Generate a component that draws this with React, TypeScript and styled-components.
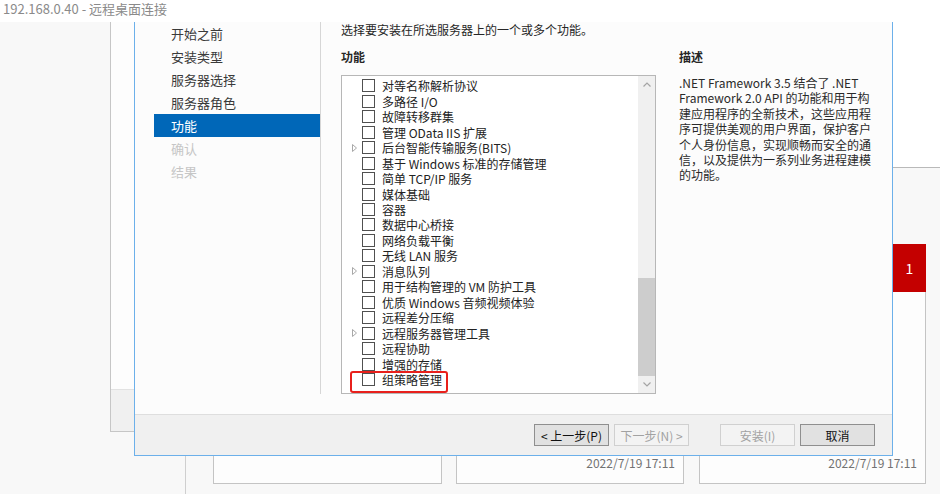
import styled, { createGlobalStyle } from "styled-components";

const GlobalStyle = createGlobalStyle`
  body {
    margin: 0;
    background: #f8f8f8;
    font-family: "Noto Sans CJK SC", "Noto Sans", sans-serif;
  }
`;

const Screen = styled.div`
  width: 940px;
  height: 494px;
  display: flex;
  flex-direction: column;
  overflow: hidden;
`;

const TitleBar = styled.div`
  height: 22px;
  box-sizing: border-box;
  flex-shrink: 0;
  background: #ffffff;
  padding: 1px 0 0 3px;
  font-size: 13px;
  line-height: 15px;
  color: #8a8a8a;
`;

const Desktop = styled.div`
  position: relative;
  flex: 1;
  background: #f8f8f8;
  overflow: hidden;
`;

// pieces of the server manager that sit behind the wizard
const TopPanel = styled.div`
  position: absolute;
  left: 880px;
  right: 0;
  top: 0;
  height: 145px;
  background: #ffffff;
  border-bottom: 1px solid #b9b9b9;
`;

const ColumnLine = styled.div`
  position: absolute;
  left: 185px;
  top: 420px;
  bottom: 0;
  border-left: 1px solid #cfcfcf;
`;

const Tile = styled.div<{ $x: number; $w: number }>`
  position: absolute;
  left: ${(p) => p.$x}px;
  top: 222px;
  width: ${(p) => p.$w}px;
  height: 240px;
  box-sizing: border-box;
  border: 1px solid #c4c4c4;
  background: #fdfdfd;
`;

const TileTime = styled.div`
  position: absolute;
  right: 8px;
  bottom: 12px;
  font-size: 12px;
  line-height: 16px;
  color: #727272;
`;

const Badge = styled.div`
  position: absolute;
  top: -1px;
  right: -1px;
  width: 33px;
  height: 48px;
  background: #c40000;
  color: #ffffff;
  font-size: 14px;
  display: flex;
  align-items: center;
  justify-content: center;
`;

const BackWindow = styled.div`
  position: absolute;
  left: 110px;
  top: 0;
  width: 700px;
  height: 410px;
  box-sizing: border-box;
  border: 1px solid #c6c6c6;
  border-top: none;
  background: #fdfdfd;
  display: flex;
  flex-direction: column;
`;

const BackFooter = styled.div`
  margin-top: auto;
  height: 41px;
  background: #f0f0f0;
  border-top: 1px solid #e2e2e2;
`;

// the wizard dialog
const Dialog = styled.div`
  position: absolute;
  left: 134px;
  top: 0;
  width: 759px;
  height: 434px;
  box-sizing: border-box;
  border: 1px solid #6cb0ea;
  border-top: none;
  background: #fcfcfc;
  display: flex;
  flex-direction: column;
`;

const DialogBody = styled.div`
  height: 392px;
  display: flex;
  padding-bottom: 20px;
  box-sizing: border-box;
`;

const Nav = styled.div`
  width: 186px;
  box-sizing: border-box;
  padding-left: 19px;
  border-right: 1px solid #d6d6d6;
  display: flex;
  flex-direction: column;
`;

const NavItem = styled.div<{ $active?: boolean; $disabled?: boolean }>`
  height: 23px;
  line-height: 23px;
  padding-left: 17px;
  font-size: 13px;
  background: ${(p) => (p.$active ? "#0067b8" : "transparent")};
  color: ${(p) => (p.$active ? "#ffffff" : p.$disabled ? "#c6c6c6" : "#3a3a3a")};
`;

const Content = styled.div`
  flex: 1;
  padding-left: 20px;
  font-size: 12px;
  color: #262626;
`;

const Intro = styled.div`
  line-height: 16px;
`;

const Columns = styled.div`
  margin-top: 11px;
  display: grid;
  grid-template-columns: 315px 210px;
  column-gap: 23px;
`;

const Heading = styled.div`
  font-weight: bold;
  line-height: 16px;
  height: 16px;
  margin-bottom: 10px;
`;

const ListBox = styled.div`
  height: 319px;
  box-sizing: border-box;
  border: 1px solid #b7b7b7;
  background: #ffffff;
  display: flex;
`;

const Items = styled.div`
  flex: 1;
  padding-top: 2px;
`;

const Row = styled.div`
  position: relative;
  height: 15.47px;
  display: flex;
  align-items: center;
  padding-left: 8px;
  color: #222222;
  white-space: nowrap;
`;

const ExpandSlot = styled.div`
  width: 12px;
  height: 8px;
  padding-left: 2px;
  box-sizing: border-box;
  display: flex;
`;

const Check = styled.div`
  width: 13px;
  height: 13px;
  box-sizing: border-box;
  border: 1px solid #505050;
  background: #ffffff;
  margin-right: 7px;
  flex-shrink: 0;
`;

const Callout = styled.div`
  position: absolute;
  left: 8px;
  top: -1px;
  width: 98px;
  height: 22px;
  box-sizing: border-box;
  border: 2px solid #e8201c;
  border-radius: 3px;
`;

const ScrollBar = styled.div`
  width: 17px;
  background: #f0f0f0;
  display: flex;
  flex-direction: column;
`;

const ScrollArrow = styled.div`
  height: 17px;
  display: flex;
  align-items: center;
  justify-content: center;
`;

const Track = styled.div`
  flex: 1;
  display: flex;
  flex-direction: column;
  justify-content: flex-end;
`;

const Thumb = styled.div`
  height: 98px;
  background: #cdcdcd;
`;

const Description = styled.div`
  margin-top: 9px;
  line-height: 15.4px;
  color: #2a2a2a;
  white-space: nowrap;
`;

const Footer = styled.div`
  height: 41px;
  box-sizing: border-box;
  background: #f0f0f0;
  border-top: 1px solid #dedede;
  display: flex;
  align-items: center;
  justify-content: flex-end;
  padding-right: 17px;
  gap: 5px;
`;

const Button = styled.button<{ $gapBefore?: number }>`
  width: 75px;
  height: 22px;
  box-sizing: border-box;
  margin: 0 0 0 ${(p) => p.$gapBefore || 0}px;
  padding: 0;
  font-family: inherit;
  font-size: 12px;
  background: #e1e1e1;
  border: 1px solid #8f8f8f;
  color: #111111;

  &:disabled {
    background: #f3f3f3;
    border-color: #d0d0d0;
    color: #a2a2a2;
  }
`;

const Expander = () => (
  <svg width="5" height="8" viewBox="0 0 5 8">
    <path d="M0.5 0.5 L4.5 4 L0.5 7.5 Z" fill="none" stroke="#a8a8a8" />
  </svg>
);

const Chevron = ({ up }: { up?: boolean }) => (
  <svg width="8" height="5" viewBox="0 0 8 5">
    <polyline
      points={up ? "0.5,4.5 4,1 7.5,4.5" : "0.5,0.5 4,4 7.5,0.5"}
      fill="none"
      stroke="#a4a4a4"
      strokeWidth="1.2"
    />
  </svg>
);

const steps = [
  { label: "开始之前" },
  { label: "安装类型" },
  { label: "服务器选择" },
  { label: "服务器角色" },
  { label: "功能", active: true },
  { label: "确认", disabled: true },
  { label: "结果", disabled: true },
];

const features = [
  { name: "对等名称解析协议" },
  { name: "多路径 I/O" },
  { name: "故障转移群集" },
  { name: "管理 OData IIS 扩展" },
  { name: "后台智能传输服务(BITS)", sub: true },
  { name: "基于 Windows 标准的存储管理" },
  { name: "简单 TCP/IP 服务" },
  { name: "媒体基础" },
  { name: "容器" },
  { name: "数据中心桥接" },
  { name: "网络负载平衡" },
  { name: "无线 LAN 服务" },
  { name: "消息队列", sub: true },
  { name: "用于结构管理的 VM 防护工具" },
  { name: "优质 Windows 音频视频体验" },
  { name: "远程差分压缩" },
  { name: "远程服务器管理工具", sub: true },
  { name: "远程协助" },
  { name: "增强的存储" },
  { name: "组策略管理", marked: true },
];

const descLines = [
  ".NET Framework 3.5 结合了 .NET",
  "Framework 2.0 API 的功能和用于构",
  "建应用程序的全新技术，这些应用程",
  "序可提供美观的用户界面，保护客户",
  "个人身份信息，实现顺畅而安全的通",
  "信，以及提供为一系列业务进程建模",
  "的功能。",
];

export default function App() {
  return (
    <Screen>
      <GlobalStyle />
      <TitleBar>192.168.0.40 - 远程桌面连接</TitleBar>
      <Desktop>
        <TopPanel />
        <ColumnLine />
        <Tile $x={213} $w={229} />
        <Tile $x={456} $w={228}>
          <TileTime>2022/7/19 17:11</TileTime>
        </Tile>
        <Tile $x={699} $w={227}>
          <Badge>1</Badge>
          <TileTime>2022/7/19 17:11</TileTime>
        </Tile>
        <BackWindow>
          <BackFooter />
        </BackWindow>

        <Dialog>
          <DialogBody>
            <Nav>
              {steps.map((s) => (
                <NavItem key={s.label} $active={s.active} $disabled={s.disabled}>
                  {s.label}
                </NavItem>
              ))}
            </Nav>
            <Content>
              <Intro>选择要安装在所选服务器上的一个或多个功能。</Intro>
              <Columns>
                <div>
                  <Heading>功能</Heading>
                  <ListBox>
                    <Items>
                      {features.map((f) => (
                        <Row key={f.name}>
                          <ExpandSlot>{f.sub && <Expander />}</ExpandSlot>
                          <Check />
                          {f.name}
                          {f.marked && <Callout />}
                        </Row>
                      ))}
                    </Items>
                    <ScrollBar>
                      <ScrollArrow>
                        <Chevron up />
                      </ScrollArrow>
                      <Track>
                        <Thumb />
                      </Track>
                      <ScrollArrow>
                        <Chevron />
                      </ScrollArrow>
                    </ScrollBar>
                  </ListBox>
                </div>
                <div>
                  <Heading>描述</Heading>
                  <Description>
                    {descLines.map((l) => (
                      <div key={l}>{l}</div>
                    ))}
                  </Description>
                </div>
              </Columns>
            </Content>
          </DialogBody>
          <Footer>
            <Button>&lt; 上一步(P)</Button>
            <Button disabled>下一步(N) &gt;</Button>
            <Button disabled $gapBefore={26}>
              安装(I)
            </Button>
            <Button>取消</Button>
          </Footer>
        </Dialog>
      </Desktop>
    </Screen>
  );
}
